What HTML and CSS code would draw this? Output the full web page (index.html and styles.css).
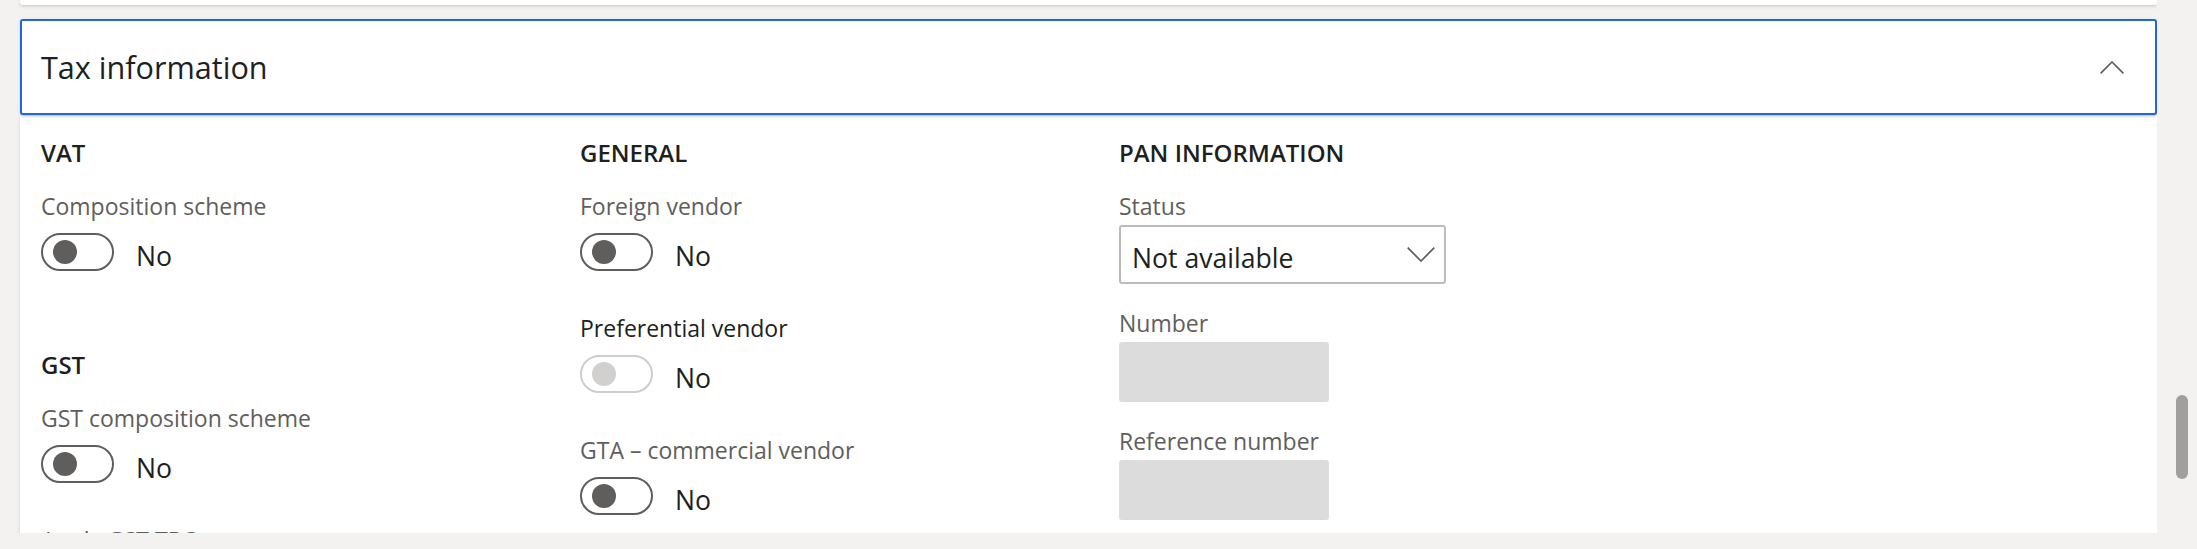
FILE: index.html
```html
<!DOCTYPE html>
<html lang="en">
<head>
<meta charset="utf-8">
<title>Tax information</title>
<link rel="stylesheet" href="styles.css">
</head>
<body>
<div class="app">
  <main class="viewport">
    <div class="prev-card"></div>
    <section class="fasttab">
      <header class="fasttab-header">
        <h2 class="fasttab-title">Tax information</h2>
        <span class="collapse-btn" role="button" aria-label="Collapse">
          <svg width="24" height="13" viewBox="0 0 24 13"><polyline points="0.6,12.4 12,1 23.4,12.4" fill="none" stroke="#605e5c" stroke-width="1.6"/></svg>
        </span>
      </header>
      <div class="fasttab-body">
        <div class="column">
          <div class="group">
            <h3 class="group-title">VAT</h3>
            <div class="field field-toggle">
              <span class="field-label">Composition scheme</span>
              <div class="toggle-row"><span class="toggle" role="switch" aria-checked="false"><span class="knob"></span></span><span class="toggle-text">No</span></div>
            </div>
          </div>
          <div class="group">
            <h3 class="group-title">GST</h3>
            <div class="field field-toggle">
              <span class="field-label">GST composition scheme</span>
              <div class="toggle-row"><span class="toggle" role="switch" aria-checked="false"><span class="knob"></span></span><span class="toggle-text">No</span></div>
            </div>
            <div class="field field-toggle">
              <span class="field-label">Apply GST TDS</span>
              <div class="toggle-row"><span class="toggle" role="switch" aria-checked="false"><span class="knob"></span></span><span class="toggle-text">No</span></div>
            </div>
          </div>
        </div>
        <div class="column">
          <div class="group">
            <h3 class="group-title">GENERAL</h3>
            <div class="field field-toggle">
              <span class="field-label">Foreign vendor</span>
              <div class="toggle-row"><span class="toggle" role="switch" aria-checked="false"><span class="knob"></span></span><span class="toggle-text">No</span></div>
            </div>
            <div class="field field-toggle">
              <span class="field-label field-label-strong">Preferential vendor</span>
              <div class="toggle-row"><span class="toggle toggle-disabled" role="switch" aria-checked="false" aria-disabled="true"><span class="knob"></span></span><span class="toggle-text">No</span></div>
            </div>
            <div class="field field-toggle">
              <span class="field-label">GTA – commercial vendor</span>
              <div class="toggle-row"><span class="toggle" role="switch" aria-checked="false"><span class="knob"></span></span><span class="toggle-text">No</span></div>
            </div>
          </div>
        </div>
        <div class="column">
          <div class="group">
            <h3 class="group-title">PAN INFORMATION</h3>
            <div class="field field-input">
              <span class="field-label">Status</span>
              <div class="select" role="combobox" aria-expanded="false">
                <span class="select-value">Not available</span>
                <svg width="28" height="15" viewBox="0 0 28 15"><polyline points="0.7,0.7 14,14 27.3,0.7" fill="none" stroke="#605e5c" stroke-width="1.7"/></svg>
              </div>
            </div>
            <div class="field field-input">
              <span class="field-label">Number</span>
              <input class="textbox" type="text" disabled>
            </div>
            <div class="field field-input">
              <span class="field-label">Reference number</span>
              <input class="textbox" type="text" disabled>
            </div>
          </div>
        </div>
      </div>
    </section>
  </main>
  <aside class="vscroll"><div class="vscroll-thumb"></div></aside>
</div>
</body>
</html>
```
FILE: styles.css
```css
* { box-sizing: border-box; }

html, body {
  margin: 0;
  height: 100%;
}

body {
  background: #f3f2f1;
  font-family: "Open Sans", "Noto Sans", sans-serif;
  color: #201f1e;
  overflow: hidden;
}

.app {
  display: flex;
  width: 2197px;
  height: 549px;
}

.viewport {
  flex: 1;
  height: 533px;
  overflow: hidden;
  padding-left: 20px;
  display: flex;
  flex-direction: column;
}

.prev-card {
  flex: none;
  height: 5px;
  margin-bottom: 14px;
  background: #fff;
  border-radius: 0 0 2px 2px;
  box-shadow: 0 1.6px 3.6px rgba(0,0,0,0.13), 0 0.3px 0.9px rgba(0,0,0,0.11);
}

.fasttab {
  flex: none;
  display: flex;
  flex-direction: column;
}

.fasttab-header {
  position: relative;
  z-index: 1;
  height: 96px;
  border: 2px solid #2266e3;
  border-radius: 3px;
  background: #fff;
  display: flex;
  align-items: center;
  justify-content: space-between;
  padding: 0 31px 1px 19px;
  box-shadow: 0 1.6px 3.6px rgba(0,0,0,0.13), 0 0.3px 0.9px rgba(0,0,0,0.11);
}

.fasttab-title {
  margin: 0;
  font-size: 30.6px;
  line-height: 40px;
  font-weight: 400;
  color: #201f1e;
}

.collapse-btn {
  display: flex;
  padding-top: 1px;
}

.collapse-btn svg { display: block; }

.fasttab-body {
  background: #fff;
  display: grid;
  grid-template-columns: repeat(3, 539px);
  padding: 22px 0 40px 21px;
  box-shadow: 0 1.6px 3.6px rgba(0,0,0,0.13), 0 0.3px 0.9px rgba(0,0,0,0.11);
}

.column,
.group,
.field {
  display: flex;
  flex-direction: column;
}

.group + .group { margin-top: 37px; }

.group-title {
  margin: 0 0 21px;
  font-size: 24px;
  line-height: 32px;
  font-weight: 600;
  color: #201f1e;
}

.field-label {
  display: block;
  font-size: 23px;
  line-height: 32px;
  color: #605e5c;
  white-space: nowrap;
}

.field-label-strong { color: #201f1e; }

.field-toggle { margin-bottom: 41px; }

.toggle-row {
  margin-top: 11px;
  height: 38px;
  display: flex;
  align-items: center;
  gap: 22px;
}

.toggle {
  flex: none;
  width: 73px;
  height: 38px;
  border: 2px solid #605e5c;
  border-radius: 19px;
  display: flex;
  align-items: center;
  padding-left: 10px;
}

.knob {
  width: 24px;
  height: 24px;
  border-radius: 50%;
  background: #605e5c;
}

.toggle-disabled { border-color: #cfcdcb; }
.toggle-disabled .knob { background: #d2d0ce; }

.toggle-text {
  font-size: 26.6px;
  line-height: 38px;
  padding-top: 7px;
  color: #201f1e;
}

.field-input { margin-bottom: 23px; }

.select {
  margin-top: 3px;
  width: 327px;
  height: 59px;
  border: 2px solid #bebcba;
  border-radius: 3px;
  background: #fff;
  display: flex;
  align-items: center;
  justify-content: space-between;
  padding: 0 9px 0 11px;
}

.select svg { display: block; flex: none; }

.select-value {
  font-size: 26.6px;
  line-height: 38px;
  padding-top: 7px;
  color: #201f1e;
}

.textbox {
  display: block;
  margin: 3px 0 0;
  width: 210px;
  height: 60px;
  border: 0;
  border-radius: 3px;
  background: #dcdcdc;
  padding: 0;
  font: inherit;
}

.vscroll {
  flex: none;
  width: 40px;
  padding: 395px 0 0 19px;
}

.vscroll-thumb {
  width: 12px;
  height: 84px;
  border-radius: 6px;
  background: #a19f9d;
}
```
